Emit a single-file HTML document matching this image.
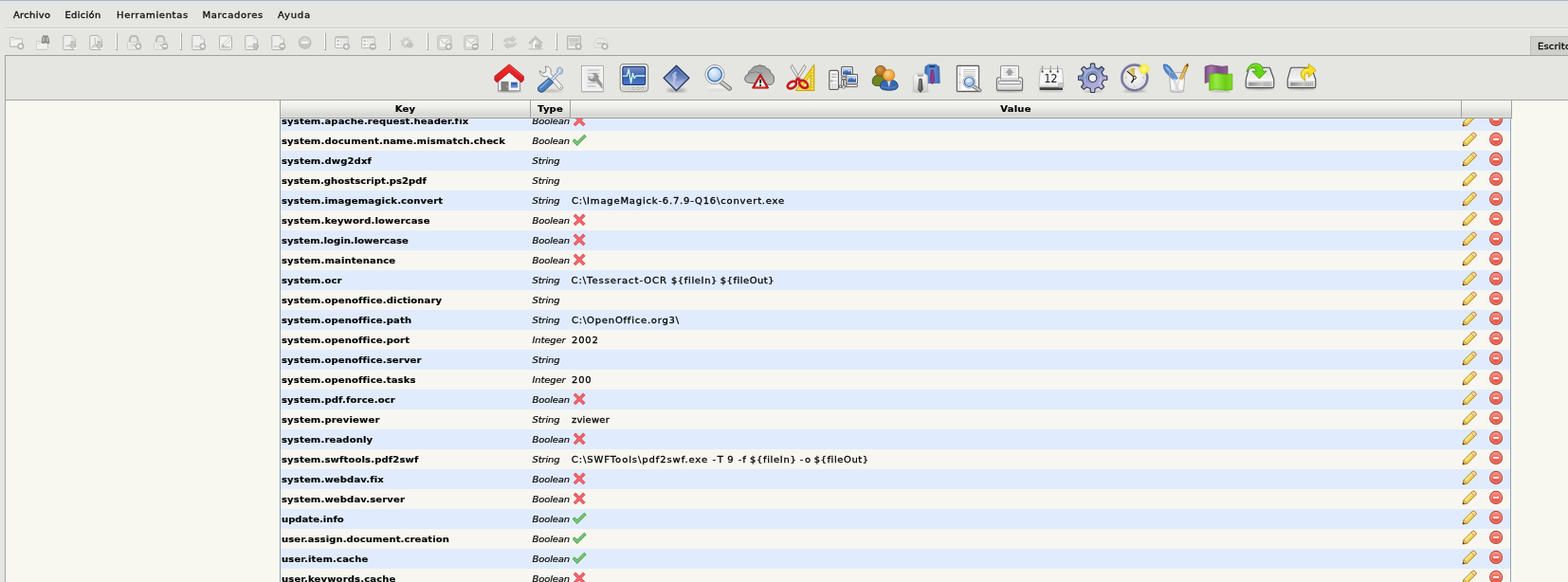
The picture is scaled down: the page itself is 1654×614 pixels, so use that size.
<!DOCTYPE html>
<html lang="es">
<head>
<meta charset="utf-8">
<title>Administration</title>
<style>
html,body{margin:0;padding:0}
body{width:1654px;height:614px;overflow:hidden;position:relative;background:#e5e6e1;font-family:"DejaVu Sans","Liberation Sans",sans-serif;font-size:10px;color:#000}
#topline{position:absolute;left:0;top:0;width:1654px;height:1px;background:#a9b5c6}
#menubar,#tab,#panel,#toolbar{will-change:transform}
#menubar{position:absolute;left:0;top:1px;width:1654px;height:28px}
.mi{position:absolute;top:0;height:28px;line-height:29px;font-size:10px;letter-spacing:.2px;white-space:nowrap;color:#111}
#menusep{position:absolute;left:5px;top:29px;width:1649px;height:1px;background:#cbcbc7;box-shadow:0 1px 0 #f7f7f3}
#toolbar{position:absolute;left:0;top:31px;width:1654px;height:27px}
#toolbar svg{position:absolute;top:6px}
#toolbar .sp{position:absolute;top:4px;width:1px;height:17px;background:#fafaf8;border-right:1px solid #a9a9a5;border-bottom:1px solid #a9a9a5}
#tab{position:absolute;left:1614px;top:38px;width:40px;height:20px;background:#cfcfcb;border-left:1px solid #bdbdb9;border-top:1px solid #bdbdb9;box-sizing:border-box;overflow:hidden}
#tab span{position:absolute;left:6.9px;top:0;line-height:19px;font-size:10px;letter-spacing:.2px;white-space:nowrap}
#panel{position:absolute;left:5px;top:58px;width:1649px;height:556px;border-left:1px solid #a2a29b;border-top:1px solid #a2a29b;box-sizing:border-box}
#bigbar{position:absolute;left:0;top:0;width:1648px;height:46px;background:#e5e6e1;border-bottom:1px solid #a2a29b}
#bigbar svg{position:absolute;top:7px}
#content{position:absolute;left:0;top:47px;width:1648px;height:509px;background:#f8f8f0}
#tbl{position:absolute;left:289px;top:0;width:1300px;height:509px;overflow:hidden}
#tbody{position:absolute;left:0;top:11px;width:1299px;box-sizing:border-box;border-left:1px solid #8b98ad;border-right:1px solid #8fa5c0}
.r{position:relative;height:21px;width:1297px}
.r.b{background:#e0ecfd}
.r.c{background:#f7f6f0}
.k{position:absolute;left:1px;top:0;line-height:21px;font-weight:bold;font-size:10px;letter-spacing:.17px;white-space:nowrap}
.t{position:absolute;left:265.5px;top:0;line-height:21px;font-style:italic;font-size:10px;letter-spacing:-.15px;white-space:nowrap}
.v{position:absolute;left:307px;top:0;line-height:21px;font-size:10px;letter-spacing:.78px;white-space:nowrap}
.bi{position:absolute;left:308px;top:2px}
.pe{position:absolute;left:1246px;top:1px}
.de{position:absolute;left:1274px;top:1px}
#thead{position:absolute;left:0;top:0;width:1300px;height:19px;box-sizing:border-box;border-bottom:1px solid #9c9c98;background:linear-gradient(#f6f6f4 0,#efefed 35%,#deded9 70%,#d6d6d2 88%,#e2e2de 100%)}
.h{position:absolute;top:0;height:18px;box-sizing:border-box;border-left:1px solid #a0a09c;text-align:center;font-weight:bold;font-size:10px;line-height:18px;letter-spacing:.2px}
.h.last{border-right:1px solid #a0a09c}
.k,.t,.v{transform:scaleY(.95);transform-origin:0 14px}
.mi{transform:scaleY(.95);transform-origin:0 18px}
.w{position:absolute;top:0;line-height:21px;white-space:nowrap}
.v,.mi,#tab span{-webkit-text-stroke:.3px #000}
.t{-webkit-text-stroke:.2px #000}
.h span{display:inline-block;transform:scaleY(.95);transform-origin:0 13px}
#tab span{transform:scaleY(.95);transform-origin:0 13px}
.k,.h span{-webkit-text-stroke:.18px #000}
</style>
</head>
<body>
<svg width="0" height="0" style="position:absolute">
<defs>
<linearGradient id="gDel" x1="0" y1="0" x2="0" y2="1"><stop offset="0" stop-color="#f6978a"/><stop offset=".5" stop-color="#ee6a5c"/><stop offset="1" stop-color="#e24a3c"/></linearGradient>
<symbol id="i-no" viewBox="0 0 16 16"><path d="M1.95 2.75 12.35 13.15M12.35 2.75 1.95 13.15" stroke="#dc4c58" stroke-width="3.4" fill="none"/><path d="M2.5 3.3 11.8 12.6M11.8 3.3 2.5 12.6" stroke="#f4686e" stroke-width="1.9" fill="none"/></symbol>
<symbol id="i-yes" viewBox="0 0 16 16"><path d="M.8 7.4 4.8 11.5 13.5 2.9" stroke="#4c9c4c" stroke-width="3.4" fill="none"/><path d="M1.3 7.9 4.8 11.4 13 3.4" stroke="#7cc978" stroke-width="1.9" fill="none"/></symbol>
<symbol id="i-pen" viewBox="0 0 16 16"><path d="M1.1 14.9 1.9 10.6 11.1 1.5Q12.6.5 14.3 2 15.8 3.7 14.8 5.1L5.6 14.2Z" fill="#f3d558" stroke="#ae822a" stroke-width="1" stroke-linejoin="round"/><path d="M3.4 11 11.8 2.7" stroke="#fbeea0" stroke-width="1.5" fill="none"/><path d="M6 13.2 14 5.2" stroke="#e2b93c" stroke-width="1" fill="none"/><path d="M11.1 1.6Q12.6.7 14.2 2.1 15.6 3.6 14.7 5L13.4 6.3 9.9 2.8Z" fill="#f9d6a8" stroke="#b88a3c" stroke-width=".8"/><path d="M1.1 14.9 1.9 10.6 5.6 14.2Z" fill="#f6cf98" stroke="#a8782c" stroke-width=".7" stroke-linejoin="round"/><path d="M1.1 14.9 1.6 12.8 3.3 14.5Z" fill="#2e1e08"/></symbol>
<symbol id="i-del" viewBox="0 0 16 16"><circle cx="8.1" cy="7.9" r="6.5" fill="url(#gDel)" stroke="#bc4238" stroke-width="1.1"/><circle cx="8.1" cy="7.9" r="5.5" fill="none" stroke="#fab4a8" stroke-width=".7" opacity=".8"/><rect x="5.1" y="7.1" width="6" height="1.7" fill="#fff"/></symbol>
<symbol id="bp" viewBox="0 0 16 16"><circle cx="11.8" cy="11.8" r="3.1" fill="#bcbcba" stroke="#a9a9a6" stroke-width=".9"/><path d="M9.8 11.8h4M11.8 9.8v4" stroke="#fff" stroke-width="1.2"/></symbol>
<symbol id="bm" viewBox="0 0 16 16"><circle cx="11.8" cy="11.8" r="3.1" fill="#bcbcba" stroke="#a9a9a6" stroke-width=".9"/><path d="M9.6 11.6h4.4" stroke="#fff" stroke-width="1.6"/></symbol>
<symbol id="doc" viewBox="0 0 16 16"><path d="M.8 1.2Q.8.5 1.5.5H9.6L13.4 4.2V14.8Q13.4 15.5 12.7 15.5H1.5Q.8 15.5.8 14.8Z" fill="#eeeeec" stroke="#b3b3af"/><path d="M9.6.8V4.2h3.6" fill="#e4e4e1" stroke="#d2d2ce" stroke-width=".8"/></symbol>
<symbol id="dn" viewBox="0 0 16 16"><path d="M9 6.5h3v4h2.2L10.5 14.6 6.8 10.5H9Z" fill="#c9c9c6" stroke="#b0b0ad" stroke-width=".8"/><circle cx="13.3" cy="14.2" r=".9" fill="#fff"/></symbol>
<symbol id="s1" viewBox="0 0 16 16"><path d="M.6 3.2Q.6 2.5 1.3 2.5H5l1 1.2h6.8q.7 0 .7.7V11.8q0 .7-.7.7H1.3q-.7 0-.7-.7Z" fill="#f1f1ef" stroke="#bdbdb9"/><path d="M2 5h3.2l.8-.8h5.5" stroke="#d4d4d1" fill="none" stroke-width=".9"/><path d="M1 11.6h9" stroke="#d8d8d5" stroke-width="1"/><use href="#bp"/></symbol>
<symbol id="s2" viewBox="0 0 16 16"><path d="M.2 7.4Q.2 6.7.9 6.7H4l.8 1h7q.7 0 .7.7V14.6q0 .7-.7.7H.9q-.7 0-.7-.7Z" fill="#f1f1ef" stroke="#c6c6c2"/><path d="M1.5 9h2.5" stroke="#d0d0cc" stroke-width=".9"/><path d="M6.6 3.2 7.6.8h1.6l.7 2 .6-2h1.6l1 2.4.8 5.1h-3.2l-.3-2.2h-.8l-.3 2.2H6.2Z" fill="#9a9a98" stroke="#777775" stroke-width=".8"/><path d="M7.8 2v5M12 2v5" stroke="#c8c8c6" stroke-width=".9"/></symbol>
<symbol id="s3" viewBox="0 0 16 16"><use href="#doc"/><path d="M3 11.5h4" stroke="#c4c4c0" stroke-width="1.3"/><use href="#dn"/></symbol>
<symbol id="s4" viewBox="0 0 16 16"><use href="#doc"/><path d="M6 2.5 6.4 9 2.2 14.4M6.4 9 11 14.4M3 12h6" stroke="#bcbcb8" fill="none" stroke-width="1"/><use href="#dn"/></symbol>
<symbol id="lk" viewBox="0 0 16 16"><path d="M3 7.5V5.2Q3 1 7.2 1 11.4 1 11.4 5.2V7.5" fill="none" stroke="#b9b9b5" stroke-width="2"/><path d="M4.6 7.5V5.4Q4.6 2.6 7.2 2.6 9.8 2.6 9.8 5.4V7.5" fill="none" stroke="#e6e6e3" stroke-width=".9"/><rect x=".6" y="7.3" width="13.2" height="7.9" rx=".8" fill="#f1f1ef" stroke="#cacac6"/><path d="M2.5 9.5h3.5M2.5 11.2h3.5M2.5 12.9h3.5" stroke="#d4d4d0" stroke-width=".9"/><path d="M7.2 9v3" stroke="#c2c2be" stroke-width="1.2"/></symbol>
<symbol id="s5" viewBox="0 0 16 16"><use href="#lk"/><use href="#bp"/></symbol>
<symbol id="s6" viewBox="0 0 16 16"><use href="#lk"/><use href="#bm"/></symbol>
<symbol id="s7" viewBox="0 0 16 16"><use href="#doc"/><path d="M3 12h5" stroke="#c4c4c0" stroke-width="1.3"/><use href="#bp"/></symbol>
<symbol id="s8" viewBox="0 0 16 16"><rect x="1.5" y=".8" width="13" height="14.5" rx=".8" fill="#f0f0ee" stroke="#b4b4b0"/><path d="M12.4 2.4 14.2 4.2 6.8 11.6 4 12.6 5 9.8Z" fill="#f7f7f5" stroke="#c0c0bc" stroke-width=".9"/><path d="M3.5 12.8h9" stroke="#bdbdb9" stroke-width="1.3"/><path d="M4 12.6 5 9.8 6.8 11.6Z" fill="#a8a8a5"/></symbol>
<symbol id="s9" viewBox="0 0 16 16"><use href="#doc"/><path d="M3 12h5" stroke="#c4c4c0" stroke-width="1.3"/><circle cx="11.6" cy="11.8" r="2.6" fill="#c4c4c1" stroke="#adadaa" stroke-width="1.6" stroke-dasharray="1.4 1"/></symbol>
<symbol id="s10" viewBox="0 0 16 16"><use href="#doc"/><path d="M3 12h5" stroke="#c4c4c0" stroke-width="1.3"/><use href="#bm"/></symbol>
<symbol id="s11" viewBox="0 0 16 16"><circle cx="7.7" cy="7.9" r="6.2" fill="#d6d6d3" stroke="#b4b4b1" stroke-width="1.1"/><path d="M1.9 8.6a5.8 5.8 0 0 0 11.6 0Z" fill="#c2c2bf" opacity=".8"/><path d="M4.3 7.9h6.8" stroke="#fff" stroke-width="2"/></symbol>
<symbol id="fm" viewBox="0 0 16 16"><rect x=".6" y="1.6" width="13.6" height="12" rx=".8" fill="#f3f3f1" stroke="#b9b9b5"/><path d="M1 2.8h12.8" stroke="#c3c3bf" stroke-width="1.6"/><path d="M2.4 6.2h2.6M2.4 10.2h2.6" stroke="#a9a9a6" stroke-width="1.3"/><path d="M6.5 5.2h6v2h-6zM6.5 9.2h6v2h-6z" fill="#fafaf9" stroke="#d2d2ce" stroke-width=".8"/></symbol>
<symbol id="s12" viewBox="0 0 16 16"><use href="#fm"/><use href="#bp" x=".6" y=".4"/></symbol>
<symbol id="s13" viewBox="0 0 16 16"><use href="#fm"/><use href="#bm" x=".6" y=".4"/></symbol>
<symbol id="s14" viewBox="0 0 16 16"><circle cx="7.6" cy="8" r="4.6" fill="none" stroke="#d2d2cf" stroke-width="3.4" stroke-dasharray="2.4 1.2"/><circle cx="7.6" cy="8" r="3.6" fill="#dededb" stroke="#c7c7c4" stroke-width="1.4"/><circle cx="7.6" cy="8" r="1.5" fill="#efefed"/><path d="M8.5 9.2h3.6V7.8l3 2.8-3 2.8V12H8.5Z" fill="#c6c6c3" stroke="#b2b2af" stroke-width=".8"/></symbol>
<symbol id="ml" viewBox="0 0 16 16"><rect x=".8" y=".8" width="14.2" height="14.4" rx="1.6" fill="#dcdcd9" stroke="#bcbcb8"/><rect x="2.6" y="3.4" width="10.6" height="9.4" fill="#f3f3f1" stroke="#d0d0cc" stroke-width=".8"/><path d="M3 4.2 7.9 9 12.8 4.2" fill="none" stroke="#cdcdc9" stroke-width="1.3"/></symbol>
<symbol id="s15" viewBox="0 0 16 16"><use href="#ml"/><use href="#bp" x=".4" y=".4"/></symbol>
<symbol id="s16" viewBox="0 0 16 16"><use href="#ml"/><use href="#bm" x=".4" y=".4"/></symbol>
<symbol id="s17" viewBox="0 0 16 16"><path d="M1.2 6.6Q3 3.2 6.6 3.2H10V1.2L14.2 4.4 10 7.6V5.8H6.6Q4.4 5.8 3.2 7.2Z" fill="#cdcdca" stroke="#bcbcb9" stroke-width=".7"/><path d="M14.8 8.8Q13 12.4 9.4 12.4H6V14.4L1.8 11.2 6 8V9.8H9.4Q11.6 9.8 12.8 8.4Z" fill="#cdcdca" stroke="#bcbcb9" stroke-width=".7"/></symbol>
<symbol id="s18" viewBox="0 0 16 16"><path d="M.8 8.2 8 1.2 15.2 8.2 13.6 9.6 8 4.2 2.4 9.6Z" fill="#c3c3c0" stroke="#b1b1ae" stroke-width=".7"/><path d="M3.2 8.8 8 4.2 12.8 8.8V14.8H3.2Z" fill="#d9d9d6"/><path d="M5.6 14.8V8.6Q5.6 6 8 5.4L8.8 7.2Q7.4 7.8 7.4 9.2V14.8Z" fill="#fff"/><path d="M7.6 10.4h4V9l3.2 2.6-3.2 2.6v-1.4h-4Z" fill="#c2c2bf" stroke="#adadaa" stroke-width=".7"/><path d="M.6 14.8h15" stroke="#bdbdba" stroke-width="1.1"/></symbol>
<symbol id="s19" viewBox="0 0 16 16"><rect x=".8" y="1.2" width="13.4" height="13.6" fill="#efefed" stroke="#adadaa" stroke-width="1.2"/><rect x="2.6" y="3" width="9.8" height="8.6" fill="#d3d3d0"/><path d="M2.6 3h9.8v3.6h-9.8z" fill="#c9c9c6"/><use href="#bp" x=".4" y=".2"/></symbol>
<symbol id="s20" viewBox="0 0 16 16"><path d="M.8 9 3 4.2Q3.4 3.4 4.2 3.4H11.6Q12.4 3.4 12.8 4.2L15 9V12.4Q15 13.2 14.2 13.2H1.6Q.8 13.2.8 12.4Z" fill="#f0f0ee" stroke="#cfcfcb"/><path d="M2.6 5.2h11" stroke="#d8d8d5" stroke-width="1"/><rect x="3" y="7.6" width="9.4" height="2" fill="#c7c7c4"/><path d="M1.2 11h13.4" stroke="#dcdcd9" stroke-width="1.2"/><use href="#bp" x=".2" y=".2"/></symbol>

<filter id="bl1" x="-30%" y="-30%" width="160%" height="160%"><feGaussianBlur stdDeviation="1"/></filter>
<filter id="bl2" x="-30%" y="-30%" width="160%" height="160%"><feGaussianBlur stdDeviation="1.6"/></filter>
<linearGradient id="gRoof" x1="0" y1="0" x2="0" y2="1"><stop offset="0" stop-color="#f0302c"/><stop offset="1" stop-color="#d8181c"/></linearGradient>
<linearGradient id="gScr" x1="0" y1="0" x2="0" y2="1"><stop offset="0" stop-color="#7a8ec6"/><stop offset=".42" stop-color="#4a6cb8"/><stop offset=".44" stop-color="#2f58a8"/><stop offset="1" stop-color="#4f7ad0"/></linearGradient>
<linearGradient id="gHandle" x1="0" y1="0" x2="1" y2="1"><stop offset="0" stop-color="#6fa0d8"/><stop offset="1" stop-color="#2f62a6"/></linearGradient>
<linearGradient id="gDia" x1=".62" y1=".05" x2=".38" y2=".95"><stop offset="0" stop-color="#38599a"/><stop offset=".45" stop-color="#6d86bd"/><stop offset=".75" stop-color="#aab6dc"/><stop offset="1" stop-color="#d6daf2"/></linearGradient>
<radialGradient id="gLens" cx=".4" cy=".35" r=".7"><stop offset="0" stop-color="#eef5fc"/><stop offset=".6" stop-color="#bcd6f0"/><stop offset="1" stop-color="#8fb6e4"/></radialGradient>
<linearGradient id="gCloud" x1="0" y1="0" x2="0" y2="1"><stop offset="0" stop-color="#9a9a9a"/><stop offset="1" stop-color="#bdbdbd"/></linearGradient>
<linearGradient id="gYel" x1="0" y1="0" x2="1" y2="0"><stop offset="0" stop-color="#f7e05a"/><stop offset="1" stop-color="#e8c818"/></linearGradient>
<radialGradient id="gHead1" cx=".4" cy=".35" r=".7"><stop offset="0" stop-color="#d8994a"/><stop offset="1" stop-color="#9c6418"/></radialGradient>
<radialGradient id="gHead2" cx=".4" cy=".35" r=".7"><stop offset="0" stop-color="#fbd08a"/><stop offset="1" stop-color="#e8901c"/></radialGradient>
<linearGradient id="gGrey" x1="0" y1="0" x2="0" y2="1"><stop offset="0" stop-color="#fafafa"/><stop offset="1" stop-color="#cfcfcf"/></linearGradient>
<linearGradient id="gGear" x1=".2" y1="0" x2=".8" y2="1"><stop offset="0" stop-color="#d6d8f0"/><stop offset=".35" stop-color="#7a90c0"/><stop offset=".7" stop-color="#b0acd8"/><stop offset="1" stop-color="#d4d4ee"/></linearGradient>
<radialGradient id="gFace" cx=".5" cy=".45" r=".6"><stop offset="0" stop-color="#ffffff"/><stop offset="1" stop-color="#d6d6d6"/></radialGradient>
<radialGradient id="gSun" cx=".5" cy=".5" r=".5"><stop offset="0" stop-color="#fffba8"/><stop offset=".55" stop-color="#f8f03c"/><stop offset="1" stop-color="#f4ea30" stop-opacity="0"/></radialGradient>
<linearGradient id="gPur" x1="0" y1="0" x2="1" y2="0"><stop offset="0" stop-color="#7a4c80"/><stop offset=".25" stop-color="#a878ae"/><stop offset=".6" stop-color="#7c4e84"/><stop offset="1" stop-color="#8e6094"/></linearGradient>
<linearGradient id="gGrn" x1="0" y1="0" x2="1" y2="0"><stop offset="0" stop-color="#74d018"/><stop offset=".3" stop-color="#9aec44"/><stop offset=".7" stop-color="#6ccc14"/><stop offset="1" stop-color="#84dc2c"/></linearGradient>
<linearGradient id="gDrv" x1="0" y1="0" x2="0" y2="1"><stop offset="0" stop-color="#dedede"/><stop offset=".6" stop-color="#f4f4f4"/><stop offset="1" stop-color="#e2e2e2"/></linearGradient>
<linearGradient id="gBar" x1="0" y1="0" x2="1" y2="0"><stop offset="0" stop-color="#8e8e8e"/><stop offset="1" stop-color="#c8c8c8"/></linearGradient>
<linearGradient id="gGlass" x1="0" y1="0" x2="0" y2="1"><stop offset="0" stop-color="#fff" stop-opacity=".08"/><stop offset=".3" stop-color="#fff" stop-opacity=".15"/><stop offset=".42" stop-color="#fff" stop-opacity=".8"/><stop offset="1" stop-color="#f4f4f4" stop-opacity=".85"/></linearGradient>
<linearGradient id="gShB" x1="0" y1="0" x2="1" y2="0"><stop offset="0" stop-color="#3e6cb4"/><stop offset=".5" stop-color="#6a98d8"/><stop offset="1" stop-color="#3e6cb4"/></linearGradient>

<symbol id="b1" viewBox="0 0 32 32">
<ellipse cx="16" cy="30.4" rx="13" ry="1.4" fill="#000" opacity=".25" filter="url(#bl1)"/>
<path d="M4.6 17 16.2 8 27.6 17V29.8H4.6Z" fill="#f5f5f5" stroke="#8a8a8a" stroke-width="1"/>
<rect x="7.9" y="20.2" width="7.2" height="9.6" fill="#7e7e7c" stroke="#6e6e6c" stroke-width=".6"/>
<circle cx="13.7" cy="25.4" r=".7" fill="#f0d860"/>
<rect x="17.4" y="20.2" width="7.8" height="6.6" fill="#3a62ac" stroke="#fdfdfd" stroke-width=".8"/>
<path d="M17.9 23.4h6.8v2.9h-6.8z" fill="#6288cc"/>
<path d="M16.2 1.9 31.3 14.4V18.4L29 20.9 16.2 10 3.2 20.9 .9 18.4V14.4Z" fill="url(#gRoof)" stroke="#b81418" stroke-width=".9" stroke-linejoin="round"/>
<path d="M16.2 3.2 30.2 14.9" stroke="#f8706c" stroke-width=".8" fill="none" opacity=".7"/>
</symbol>

<symbol id="b2" viewBox="0 0 32 32">
<ellipse cx="16" cy="30" rx="12" ry="1.5" fill="#000" opacity=".18" filter="url(#bl1)"/>
<path d="M10 4.2Q13.8 3.4 15.6 6.4 16.8 9 15.8 11.4L28 24.6Q29.4 26.6 27.8 28 26.2 29.2 24.6 27.6L12.6 14.4Q9.6 15.6 7 14 4 12 4.4 8.6L8 11.4 11 9.8 10.8 6.4Z" fill="#f2f2f2" stroke="#8e8e8e" stroke-width="1" stroke-linejoin="round"/>
<circle cx="26.4" cy="26.2" r=".8" fill="#9a9a9a"/>
<path d="M25.9 4.8 28.9 7.8 27.6 11.6 24.6 12.4 17.6 19.6 15.6 17.6 22.6 10.2 23 6.4Z" fill="#b9c9e2" stroke="#7e92b4" stroke-width=".9" stroke-linejoin="round"/>
<path d="M26 6.4 24.2 11 17 18.2" stroke="#eef2fa" stroke-width=".9" fill="none"/>
<path d="M14 16.4 18.6 21 8.6 30.4Q5.6 32.4 3.2 30.2 1.4 27.8 3.4 25.2Z" fill="url(#gHandle)" stroke="#24508e" stroke-width="1" stroke-linejoin="round"/>
<path d="M5 27 13.6 18.6" stroke="#9cc0ea" stroke-width="1.2" fill="none" opacity=".8"/>
</symbol>

<symbol id="b3" viewBox="0 0 32 32">
<rect x="4.2" y="29.6" width="23.6" height="1.6" fill="#000" opacity=".25" filter="url(#bl1)"/>
<rect x="4.4" y="3.4" width="23" height="27" fill="#efefef" stroke="#adadad" stroke-width="1"/>
<rect x="5.6" y="4.6" width="20.6" height="24.6" fill="none" stroke="#fafafa" stroke-width="1"/>
<path d="M10.5 8h13M10.5 11.4h13M10.5 14.8h13M10.5 18.2h13M10.5 21.6h13M10.5 25h9" stroke="#c9c9c9" stroke-width="1.5"/>
<path d="M16.2 11.6Q19.6 10.6 21.4 13 22.6 15 21.8 17.2L26 22.6 26.2 27.2 20 19.6Q16.6 21 13.8 19.2 11.8 17.6 11.6 15.6L14.8 17.4 18 15.8 18.2 13.2Z" fill="#8f8f8f" stroke="#858585" stroke-width=".6" stroke-linejoin="round" opacity=".92"/>
</symbol>

<symbol id="b4" viewBox="0 0 32 32">
<ellipse cx="16" cy="30.6" rx="14" ry="1.2" fill="#000" opacity=".22" filter="url(#bl1)"/>
<rect x="1.2" y="1.6" width="29.4" height="28.6" rx="3.4" fill="#fbfbf9" stroke="#8e8e8a" stroke-width="1.1"/>
<rect x="2.4" y="24.6" width="27" height="4.6" rx="1.6" fill="#d6d6d0"/>
<rect x="3.9" y="4.4" width="23.8" height="19" rx="1.6" fill="url(#gScr)" stroke="#1d3c7c" stroke-width="1.2"/>
<path d="M4 14.2H8.4L10.2 7.2 12.6 21.6 14.4 11.4 16.2 16.6 17.8 14H27.4" fill="none" stroke="#d6ffe2" stroke-width="1.3" stroke-linejoin="round"/>
<circle cx="15.2" cy="27.4" r="1.2" fill="#f6f6f4" stroke="#9a9a94" stroke-width=".7"/><circle cx="19.9" cy="27.4" r="1.2" fill="#f6f6f4" stroke="#9a9a94" stroke-width=".7"/><circle cx="24.5" cy="27.4" r="1.2" fill="#f6f6f4" stroke="#9a9a94" stroke-width=".7"/>
</symbol>

<symbol id="b5" viewBox="0 0 32 32">
<ellipse cx="16.5" cy="29.4" rx="10.5" ry="2" fill="#000" opacity=".3" filter="url(#bl2)"/>
<path d="M16.5 3.2 29.9 16.3 16.5 29.5 3.1 16.3Z" fill="url(#gDia)" stroke="#2b3a66" stroke-width="1.4" stroke-linejoin="round"/>
<path d="M16.5 5 28 16.3 16.5 27.6 5 16.3Z" fill="none" stroke="#a8b8e0" stroke-width=".7" opacity=".7"/>
<path d="M15.2 9.4 16.8 10.2 15.6 13.4 17 15.4 15.8 17 15 20.8 13.6 24 11.6 23.8 12.8 20 13 16.4 12 13Z" fill="#b4c2e6" opacity=".9"/>
<path d="M16 21.6 18 19.8 19.4 20.6 20.6 18.6 22.2 19.2 23 17.2 24.6 17.6 22 21.8 18.6 25.2 15.4 24.8Z" fill="#9fb0dc" opacity=".8"/>
</symbol>

<symbol id="b6" viewBox="0 0 32 32">
<ellipse cx="14.8" cy="27.2" rx="9" ry="2.4" fill="#fff" opacity=".75" filter="url(#bl1)"/>
<ellipse cx="14.8" cy="28.6" rx="9" ry="1.4" fill="#000" opacity=".12" filter="url(#bl1)"/>
<path d="M19.6 20.6 28.6 27.4" stroke="#6a6a6a" stroke-width="4.6" stroke-linecap="round"/>
<path d="M19.6 20.6 28.6 27.4" stroke="#c2c2c2" stroke-width="2.8" stroke-linecap="round"/>
<path d="M21.4 21 28 26" stroke="#e6e6e6" stroke-width=".9" stroke-linecap="round"/>
<circle cx="13" cy="12.6" r="10.1" fill="#f6f8fa" stroke="#9a9a9a" stroke-width="1"/>
<circle cx="13" cy="12.6" r="7.4" fill="url(#gLens)" stroke="#3f6eb4" stroke-width="1.3"/>
<path d="M8 11Q9 6.8 13.6 6.6 11 8.4 8 11Z" fill="#fff" opacity=".8"/>
</symbol>

<symbol id="b7" viewBox="0 0 32 32">
<path d="M6 21.4Q.6 21.2.6 16.8.8 13 4.2 12.6 4 8.6 7.8 7.6 9.2 3.6 13.4 3.8 16 2 19 3.4 22.2 3.2 23.8 6.2 27.6 6.8 28 11 31.6 12.4 31.6 17 31.8 23.2 26.6 23.4Z" fill="url(#gCloud)" stroke="#6e6e6e" stroke-width="1" stroke-linejoin="round"/>
<path d="M3.6 13.4Q5.6 9.4 9.4 10.6 12.4 8.6 15.2 10.8 17.6 10.2 19.4 12" fill="none" stroke="#777" stroke-width=".9"/>
<path d="M17.1 13.2 24.8 26.5H9.4Z" fill="#fff" stroke="#a40000" stroke-width="2.2" stroke-linejoin="round"/>
<path d="M17.1 13.2 24.8 26.5H9.4Z" fill="none" stroke="#d42828" stroke-width=".9" stroke-linejoin="round"/>
<rect x="16.2" y="17.6" width="1.9" height="4.2" fill="#000"/><rect x="16.2" y="22.9" width="1.9" height="1.9" fill="#000"/>
</symbol>

<symbol id="b8" viewBox="0 0 32 32">
<path d="M29.8 2V29.5H10.4Z" fill="url(#gYel)" stroke="#c4a400" stroke-width="1" stroke-linejoin="round"/>
<path d="M26 13.4V25.6H17.2Z" fill="#f4ecb0" stroke="#c4a400" stroke-width=".8" stroke-linejoin="round"/>
<path d="M28 6v1M28 9v1M28 12v1M28 15v1M28 18v1M28 21v1M28 24v1M28 27v1" stroke="#fff7b0" stroke-width="1.6"/>
<path d="M6.6 2.4 5 5.2 13.4 18.4 15.4 17.2Z" fill="#ebebe8" stroke="#8a8a8a" stroke-width=".9" stroke-linejoin="round"/>
<path d="M19.4 2.4 21 5.2 12.4 18.4 10.4 17.2Z" fill="#ebebe8" stroke="#8a8a8a" stroke-width=".9" stroke-linejoin="round"/>
<ellipse cx="6.4" cy="23.6" rx="5" ry="3.2" transform="rotate(-32 6.4 23.6)" fill="none" stroke="#c41818" stroke-width="2.6"/>
<ellipse cx="18.6" cy="22.8" rx="5" ry="3.3" transform="rotate(38 18.6 22.8)" fill="none" stroke="#c41818" stroke-width="2.6"/>
<path d="M10 20.6 12.8 16.6 15.6 20.4" fill="none" stroke="#cc1c1c" stroke-width="2.6" stroke-linejoin="round"/>
</symbol>

<symbol id="mon" viewBox="0 0 13 11"><rect x=".6" y=".6" width="11.8" height="9.8" rx="1.4" fill="#f4f4f4" stroke="#5e5e5e" stroke-width="1.1"/><rect x="2.2" y="2.2" width="8.6" height="6.4" fill="#4a78bc"/><path d="M2.2 2.2h8.6v2.6L8.6 6 6.4 4.2 2.2 5.4Z" fill="#b8cdea"/><path d="M2.2 6.8h8.6v1.8h-8.6z" fill="#2f5ea6"/></symbol>
<symbol id="b9" viewBox="0 0 32 32">
<path d="M10 25.6h12M16.6 14v11" stroke="#666" stroke-width="1" fill="none"/>
<rect x="14.8" y="15.2" width="4.4" height="2.2" fill="#f4f4f4" stroke="#5e5e5e" stroke-width=".9"/>
<rect x="14.6" y="18.6" width="2" height="6" fill="#f0f0f0" stroke="#6a6a6a" stroke-width=".8"/><rect x="17.6" y="18.6" width="2" height="6" fill="#f0f0f0" stroke="#6a6a6a" stroke-width=".8"/>
<rect x="12.6" y="24" width="2" height="2.4" fill="#e8e8e8" stroke="#666" stroke-width=".8"/><rect x="15.4" y="24.2" width="3" height="3" rx="1" fill="#d8d8d8" stroke="#777" stroke-width=".8"/>
<use href="#mon" x="14" y="3.8" width="13" height="11"/>
<use href="#mon" x="19.2" y="11.8" width="13" height="11"/>
<rect x="19.8" y="23" width="11.6" height="2.6" rx=".6" fill="#f6f6f6" stroke="#5e5e5e" stroke-width="1"/>
<path d="M1.8 10Q1.8 8.4 3.4 8.4H9.8Q11.4 8.4 11.4 10V27.2Q11.4 28.4 10.2 28.4H3Q1.8 28.4 1.8 27.2Z" fill="#fbfbfb" stroke="#5e5e5e" stroke-width="1.2"/>
<path d="M3.8 12.4h5.6M3.8 15.4h5.6" stroke="#bdbdbd" stroke-width="1.7"/>
<circle cx="4.4" cy="19.4" r="1" fill="#e0e0e0" stroke="#777" stroke-width=".7"/><path d="M6.4 19.4h3" stroke="#c4c4c4" stroke-width="1.4"/>
<path d="M4 22v5M5.6 22v5M7.2 22v5M8.8 22v5" stroke="#c8c8c8" stroke-width=".8"/>
</symbol>

<symbol id="b10" viewBox="0 0 32 32">
<path d="M3.2 20.4Q3.2 13.4 9.6 13.4 16.2 13.4 16.2 20.4 16.2 24.6 9.6 24.6 3.2 24.6 3.2 20.4Z" fill="#6f8420" stroke="#4a5a10" stroke-width="1"/>
<circle cx="11.9" cy="8.8" r="5.5" fill="url(#gHead1)" stroke="#85541a" stroke-width=".9"/>
<path d="M11.4 25Q11.4 18.2 20.8 18.2 30.2 18.2 30.2 25 30.2 29.2 20.8 29.2 11.4 29.2 11.4 25Z" fill="#3868ac" stroke="#204a87" stroke-width="1"/>
<path d="M13 25.2Q20.8 28.6 28.6 25.2" fill="none" stroke="#6f9ad8" stroke-width=".8" opacity=".8"/>
<path d="M19.2 18.8 20.8 25.4 22.4 18.8Z" fill="#e8f0fa" stroke="#c6d6ee" stroke-width=".5"/>
<circle cx="20.7" cy="13.3" r="6" fill="url(#gHead2)" stroke="#d08618" stroke-width=".9"/>
</symbol>

<symbol id="b11" viewBox="0 0 32 32">
<ellipse cx="10" cy="30.4" rx="9" ry="1.2" fill="#000" opacity=".25" filter="url(#bl1)"/>
<path d="M15 4.4 18.6 2.2H26L29.6 4.4 30.2 21.6H14.4Z" fill="url(#gShB)" stroke="#3465a4" stroke-width=".9" stroke-linejoin="round"/>
<path d="M18.8 3h7L25 5.6H19.6Z" fill="#1f4690"/>
<path d="M21.2 7.8h2.4L24.8 19.6 22.4 22.8 20 19.6Z" fill="#8c3c8e" stroke="#6e2a72" stroke-width=".7" stroke-linejoin="round"/>
<path d="M2.6 13.6 6.2 11.4H13.6L17.2 13.6 17.6 30H2.2Z" fill="url(#gGrey)" stroke="#c8c8c8" stroke-width=".9" stroke-linejoin="round"/>
<path d="M6.4 12.4h7L12.6 14.8H7.2Z" fill="#a6a6a2"/>
<path d="M8.8 17.2h2.4L12.4 28.4 10 31.4 7.6 28.4Z" fill="#5a5a58" stroke="#444" stroke-width=".7" stroke-linejoin="round"/>
<path d="M9.6 18.4 9 28" stroke="#8e8e8c" stroke-width=".9"/>
</symbol>

<symbol id="b12" viewBox="0 0 32 32">
<rect x="4.2" y="29.6" width="23.6" height="1.6" fill="#000" opacity=".3" filter="url(#bl1)"/>
<rect x="4.4" y="3.4" width="23.2" height="27" rx=".8" fill="#fcfcfc" stroke="#5a5a5a" stroke-width="1.1"/>
<path d="M7.6 4v26" stroke="#e0e0e0" stroke-width="1.6"/>
<path d="M11 7.6h13M11 9.8h13M11 12h13M11 14.2h13" stroke="#b9b9b9" stroke-width=".9"/>
<circle cx="7.6" cy="12.4" r=".6" fill="#c07070"/><circle cx="7.6" cy="21.2" r=".6" fill="#c07070"/>
<path d="M21.6 24.8 28.6 29.4" stroke="#6e6e6e" stroke-width="3.8" stroke-linecap="round"/>
<path d="M21.6 24.8 28.6 29.4" stroke="#c6c6c6" stroke-width="2.2" stroke-linecap="round"/>
<circle cx="17.4" cy="20.4" r="6.6" fill="#f4f6fa" stroke="#a2a2a2" stroke-width=".9"/>
<circle cx="17.4" cy="20.4" r="4.9" fill="url(#gLens)" stroke="#3f6eb4" stroke-width="1.2"/>
<path d="M14 21.4h6.8M14.6 23h5.6" stroke="#8eaede" stroke-width=".8" opacity=".8"/>
</symbol>

<symbol id="b13" viewBox="0 0 32 32">
<ellipse cx="16" cy="30.2" rx="14" ry="1.3" fill="#000" opacity=".28" filter="url(#bl1)"/>
<path d="M2.4 18.4Q2.4 15.8 5 15.8H27Q29.6 15.8 29.6 18.4V27.4Q29.6 29.4 27.6 29.4H4.4Q2.4 29.4 2.4 27.4Z" fill="url(#gGrey)" stroke="#6c6c6c" stroke-width="1.1"/>
<rect x="6.6" y="3.4" width="18.8" height="15" rx=".6" fill="#fbfbfb" stroke="#8a8a8a" stroke-width="1"/>
<path d="M9 6.6h14M9 8.8h14M9 11h14M9 13.2h14" stroke="#d0d0d0" stroke-width=".9"/>
<path d="M16 5.8 20.6 11H18.2V13.8H13.8V11H11.4Z" fill="#a2a2a2"/>
<path d="M6.8 15.6h18.4v3.2H6.8z" fill="#d9d9d9" opacity=".9"/>
<path d="M4.4 19.6h23.2v2.2Q27.6 22.8 26.6 22.8H5.4Q4.4 22.8 4.4 21.8Z" fill="#fdfdfd" stroke="#7a7a7a" stroke-width=".9"/>
<path d="M3.6 24.4h24.8" stroke="#fff" stroke-width="1" opacity=".7"/>
</symbol>

<symbol id="b14" viewBox="0 0 32 32">
<ellipse cx="16" cy="29.4" rx="13" ry="1.2" fill="#000" opacity=".22" filter="url(#bl1)"/>
<rect x="3.6" y="25.8" width="24.4" height="3.1" rx=".6" fill="#404040"/>
<path d="M4.4 6.6H27.6L28.8 24.8Q28.8 25.8 27.8 25.8H3.8Q2.8 25.8 2.8 24.8Z" fill="#f6f6f6" stroke="#b6b6b6" stroke-width=".9"/>
<path d="M3 24.2h25.6" stroke="#dadada" stroke-width="1"/>
<path d="M28.6 21.2 23.4 21.8 24 26.2H27.8Q28.8 26.2 28.8 25.2Z" fill="#c9c9c9" stroke="#a8a8a8" stroke-width=".6"/>
<path d="M6.4 3.8V9M15.2 3.2V9M22.6 3.2V9" stroke="#9a9a9a" stroke-width="1.1"/>
<circle cx="6.6" cy="9.6" r="1.1" fill="#444"/><circle cx="15.2" cy="9.6" r="1.1" fill="#444"/><circle cx="22.8" cy="9.6" r="1.1" fill="#444"/>
<circle cx="6.6" cy="4.6" r="1.3" fill="none" stroke="#c0c0c0" stroke-width=".8"/>
<text x="15.2" y="20.5" font-family="'DejaVu Sans','Liberation Sans',sans-serif" font-size="11.5" text-anchor="middle" fill="#1a1a1a" letter-spacing="-.4">12</text>
</symbol>

<symbol id="b15" viewBox="0 0 32 32">
<ellipse cx="16" cy="30.6" rx="10" ry="1.3" fill="#000" opacity=".2" filter="url(#bl1)"/>
<path d="M13.1 5.2 L13.6 1.1 L17.6 1.1 L18.1 5.2 L21.7 6.7 L24.9 4.2 L27.7 7.0 L25.2 10.2 L26.7 13.8 L30.8 14.3 L30.8 18.3 L26.7 18.8 L25.2 22.4 L27.7 25.6 L24.9 28.4 L21.7 25.9 L18.1 27.4 L17.6 31.5 L13.6 31.5 L13.1 27.4 L9.5 25.9 L6.3 28.4 L3.5 25.6 L6.0 22.4 L4.5 18.8 L0.4 18.3 L0.4 14.3 L4.5 13.8 L6.0 10.2 L3.5 7.0 L6.3 4.2 L9.5 6.7Z" fill="url(#gGear)" stroke="#2e3650" stroke-width="1.1" stroke-linejoin="round"/>
<circle cx="15.6" cy="16.3" r="8.6" fill="none" stroke="#e4e4f6" stroke-width=".8" opacity=".6"/>
<path d="M7.4 19.6A8.8 8.8 0 0 0 21.6 23" fill="none" stroke="#a59ed0" stroke-width="3.4" opacity=".55"/>
<circle cx="15.6" cy="16.3" r="4.2" fill="#f0f0ee" stroke="#2e3650" stroke-width="1.1"/>
</symbol>

<symbol id="b16" viewBox="0 0 32 32">
<ellipse cx="16" cy="30.2" rx="12" ry="1.6" fill="#000" opacity=".22" filter="url(#bl1)"/>
<circle cx="15.8" cy="15.9" r="13.5" fill="url(#gFace)" stroke="#73739a" stroke-width="2.5"/>
<circle cx="15.8" cy="15.9" r="14.8" fill="none" stroke="#a6a6c0" stroke-width=".6"/>
<path d="M15.8 15.9 8.4 9.2A10 10 0 0 1 15.8 5.6Z" fill="#e4c860" opacity=".85"/>
<path d="M15.8 15.9 15.8 5.6A10 10 0 0 0 11.4 6.8Z" fill="#cfae48" opacity=".7"/>
<circle cx="15.8" cy="6.6" r=".8" fill="#b8b8b8"/><circle cx="25" cy="15.9" r=".8" fill="#b8b8b8"/><circle cx="15.8" cy="25.2" r=".8" fill="#b8b8b8"/><circle cx="6.6" cy="15.9" r=".8" fill="#b8b8b8"/>
<path d="M15.8 15.9 8.2 9.4" stroke="#111" stroke-width="1.1" stroke-linecap="round"/>
<path d="M15.8 15.9 12.8 20.8" stroke="#111" stroke-width="1.5" stroke-linecap="round"/>
<circle cx="15.8" cy="15.9" r="1.6" fill="#fff" stroke="#111" stroke-width=".9"/>
<circle cx="25.8" cy="6.8" r="6.7" fill="url(#gSun)"/>
</symbol>

<symbol id="b17" viewBox="0 0 32 32">
<ellipse cx="16.6" cy="30.8" rx="8" ry="1" fill="#000" opacity=".15" filter="url(#bl1)"/>
<path d="M27.8 1 28.4 3.4 21.8 18.6 19 17.4 25.4 3.2Z" fill="#e0a434" stroke="#a87414" stroke-width=".8" stroke-linejoin="round"/>
<path d="M27.8 1 28.4 3.4 27 4.6 26 3.4Z" fill="#5a3c10"/>
<path d="M26.4 4.4 20.4 17.6" stroke="#f4cc70" stroke-width=".9"/>
<path d="M2.4 2Q6.4 1 10 5.6L17.4 16.8 13.6 19.4 4.6 10Q1.8 6 2.4 2Z" fill="#4e84cc" stroke="#3a6cb4" stroke-width=".8" stroke-linejoin="round"/>
<path d="M4.4 4.4 8 9.4M6 4.6 10.4 10.6" stroke="#b8d4f4" stroke-width="1" opacity=".9"/>
<path d="M8.4 10.4H25L23.6 29Q23.4 31 21.4 31H12Q10 31 9.8 29Z" fill="url(#gGlass)" stroke="#a6a6a6" stroke-width=".9" stroke-linejoin="round"/>
<path d="M13.4 18 17.8 29.8" stroke="#c8d4ec" stroke-width="3" opacity=".75"/>
<path d="M19 18.4 15 29" stroke="#f0c8b8" stroke-width="2.2" opacity=".6"/>
<path d="M10.4 29.2Q16.6 32 23 29.2" fill="none" stroke="#c2c2c2" stroke-width=".9"/>
</symbol>

<symbol id="b18" viewBox="0 0 32 32">
<ellipse cx="18.6" cy="30" rx="11" ry="1.2" fill="#000" opacity=".22" filter="url(#bl1)"/>
<path d="M2.2 4.4Q7.6 1.8 13.6 3.4 19.6 5.2 25.8 3.8V20Q19.6 21.2 13.6 19.6 7.6 18.2 2.2 21.6Z" fill="url(#gPur)" stroke="#6a3e70" stroke-width=".9" stroke-linejoin="round"/>
<path d="M6.8 13Q12.6 10.4 18.6 12 24.8 13.4 30.8 12V28.4Q24.8 30 18.6 28.4 12.6 27 6.8 29.4Z" fill="url(#gGrn)" stroke="#5cb80c" stroke-width=".9" stroke-linejoin="round"/>
</symbol>

<symbol id="drv" viewBox="0 0 32 32">
<ellipse cx="16" cy="27.2" rx="14.4" ry="1.3" fill="#000" opacity=".3" filter="url(#bl1)"/>
<path d="M5.8 5.2H25.4Q26.4 5.2 26.8 6.2L30.6 17.2Q30.8 17.8 30.8 18.4V25Q30.8 26.6 29.2 26.6H2.8Q1.2 26.6 1.2 25V18.4Q1.2 17.8 1.4 17.2L4.4 6.2Q4.8 5.2 5.8 5.2Z" fill="url(#gDrv)" stroke="#4c4c4c" stroke-width="1.1" stroke-linejoin="round"/>
<path d="M2.4 18.4H29.6" stroke="#fff" stroke-width="1.2" opacity=".9"/>
<rect x="2.6" y="19.2" width="26.8" height="6.2" rx=".8" fill="#dadada"/>
<rect x="4.4" y="21" width="14.4" height="3.6" fill="url(#gBar)"/>
<path d="M20 20.6v4.4M21.8 20.6v4.4M23.6 20.6v4.4M25.4 20.6v4.4M27.2 20.6v4.4" stroke="#9a9a9a" stroke-width=".9"/>
</symbol>
<symbol id="b19" viewBox="0 0 32 32">
<use href="#drv"/>
<path d="M2 9.6Q4.2 1 11.6 1 18.8 1 19.2 9.2H23L15.5 17 8 9.2H12.2Q11.8 5.6 8.6 5.4 5 5.2 2 9.6Z" fill="#66d414" stroke="#3e9c04" stroke-width=".9" stroke-linejoin="round"/>
<path d="M3.6 7.2Q6.6 2.6 11.6 2.2 16.6 2.2 17.8 7.6" fill="none" stroke="#a4f060" stroke-width=".9" opacity=".8"/>
</symbol>
<symbol id="b20" viewBox="0 0 32 32">
<use href="#drv"/>
<path d="M19.8 19.2Q14.6 15.6 15.4 11 16.4 5.8 23.4 5.8V1.2L31.2 8.2 23.4 15.4V11Q20.6 10.8 19.6 12.8 18.4 15.2 19.8 19.2Z" fill="#f4de28" stroke="#c8a800" stroke-width=".9" stroke-linejoin="round"/>
<path d="M17 13.2Q17 7.8 24 7.2" fill="none" stroke="#fff6a0" stroke-width=".9" opacity=".8"/>
</symbol>

</defs>
</svg>
<div id="topline"></div>
<div id="menubar"><span class="mi" style="left:14px;letter-spacing:.28px">Archivo</span><span class="mi" style="left:68.5px;letter-spacing:.28px">Edición</span><span class="mi" style="left:123px;letter-spacing:.64px">Herramientas</span><span class="mi" style="left:213.5px;letter-spacing:.64px">Marcadores</span><span class="mi" style="left:293px;letter-spacing:.78px">Ayuda</span></div>
<div id="menusep"></div>
<div id="toolbar">
<svg width="16" height="16" viewBox="0 0 16 16" style="left:10px"><use href="#s1"/></svg>
<svg width="16" height="16" viewBox="0 0 16 16" style="left:38px"><use href="#s2"/></svg>
<svg width="16" height="16" viewBox="0 0 16 16" style="left:66px"><use href="#s3"/></svg>
<svg width="16" height="16" viewBox="0 0 16 16" style="left:94px"><use href="#s4"/></svg>
<svg width="16" height="16" viewBox="0 0 16 16" style="left:134px"><use href="#s5"/></svg>
<svg width="16" height="16" viewBox="0 0 16 16" style="left:162px"><use href="#s6"/></svg>
<svg width="16" height="16" viewBox="0 0 16 16" style="left:202px"><use href="#s7"/></svg>
<svg width="16" height="16" viewBox="0 0 16 16" style="left:230px"><use href="#s8"/></svg>
<svg width="16" height="16" viewBox="0 0 16 16" style="left:258px"><use href="#s9"/></svg>
<svg width="16" height="16" viewBox="0 0 16 16" style="left:286px"><use href="#s10"/></svg>
<svg width="16" height="16" viewBox="0 0 16 16" style="left:314px"><use href="#s11"/></svg>
<svg width="16" height="16" viewBox="0 0 16 16" style="left:353px"><use href="#s12"/></svg>
<svg width="16" height="16" viewBox="0 0 16 16" style="left:381px"><use href="#s13"/></svg>
<svg width="16" height="16" viewBox="0 0 16 16" style="left:421px"><use href="#s14"/></svg>
<svg width="16" height="16" viewBox="0 0 16 16" style="left:461px"><use href="#s15"/></svg>
<svg width="16" height="16" viewBox="0 0 16 16" style="left:489px"><use href="#s16"/></svg>
<svg width="16" height="16" viewBox="0 0 16 16" style="left:530px"><use href="#s17"/></svg>
<svg width="16" height="16" viewBox="0 0 16 16" style="left:557px"><use href="#s18"/></svg>
<svg width="16" height="16" viewBox="0 0 16 16" style="left:597.5px"><use href="#s19"/></svg>
<svg width="16" height="16" viewBox="0 0 16 16" style="left:626px"><use href="#s20"/></svg>
<i class="sp" style="left:122px"></i>
<i class="sp" style="left:190px"></i>
<i class="sp" style="left:342px"></i>
<i class="sp" style="left:410px"></i>
<i class="sp" style="left:450px"></i>
<i class="sp" style="left:518px"></i>
<i class="sp" style="left:586px"></i>
</div>
<div id="tab"><span>Escritorio</span></div>
<div id="panel">
<div id="bigbar">
<svg width="32" height="32" viewBox="0 0 32 32" style="left:515px"><use href="#b1"/></svg>
<svg width="32" height="32" viewBox="0 0 32 32" style="left:559px"><use href="#b2"/></svg>
<svg width="32" height="32" viewBox="0 0 32 32" style="left:603px"><use href="#b3"/></svg>
<svg width="32" height="32" viewBox="0 0 32 32" style="left:647px"><use href="#b4"/></svg>
<svg width="32" height="32" viewBox="0 0 32 32" style="left:691px"><use href="#b5"/></svg>
<svg width="32" height="32" viewBox="0 0 32 32" style="left:735px"><use href="#b6"/></svg>
<svg width="32" height="32" viewBox="0 0 32 32" style="left:779px"><use href="#b7"/></svg>
<svg width="32" height="32" viewBox="0 0 32 32" style="left:823px"><use href="#b8"/></svg>
<svg width="32" height="32" viewBox="0 0 32 32" style="left:867px"><use href="#b9"/></svg>
<svg width="32" height="32" viewBox="0 0 32 32" style="left:911px"><use href="#b10"/></svg>
<svg width="32" height="32" viewBox="0 0 32 32" style="left:955px"><use href="#b11"/></svg>
<svg width="32" height="32" viewBox="0 0 32 32" style="left:999px"><use href="#b12"/></svg>
<svg width="32" height="32" viewBox="0 0 32 32" style="left:1043px"><use href="#b13"/></svg>
<svg width="32" height="32" viewBox="0 0 32 32" style="left:1087px"><use href="#b14"/></svg>
<svg width="32" height="32" viewBox="0 0 32 32" style="left:1131px"><use href="#b15"/></svg>
<svg width="32" height="32" viewBox="0 0 32 32" style="left:1175px"><use href="#b16"/></svg>
<svg width="32" height="32" viewBox="0 0 32 32" style="left:1219px"><use href="#b17"/></svg>
<svg width="32" height="32" viewBox="0 0 32 32" style="left:1263px"><use href="#b18"/></svg>
<svg width="32" height="32" viewBox="0 0 32 32" style="left:1307px"><use href="#b19"/></svg>
<svg width="32" height="32" viewBox="0 0 32 32" style="left:1351px"><use href="#b20"/></svg>
</div>
<div id="content">
<div id="tbl">
<div id="tbody">
<div class="r b"><b class="k">system.apache.request.header.fix</b><i class="t">Boolean</i><svg class="bi" width="16" height="16" viewBox="0 0 16 16"><use href="#i-no"/></svg><svg class="pe" width="16" height="16" viewBox="0 0 16 16"><use href="#i-pen"/></svg><svg class="de" width="16" height="16" viewBox="0 0 16 16"><use href="#i-del"/></svg></div>
<div class="r c"><b class="k">system.document.name.mismatch.check</b><i class="t">Boolean</i><svg class="bi" width="16" height="16" viewBox="0 0 16 16"><use href="#i-yes"/></svg><svg class="pe" width="16" height="16" viewBox="0 0 16 16"><use href="#i-pen"/></svg><svg class="de" width="16" height="16" viewBox="0 0 16 16"><use href="#i-del"/></svg></div>
<div class="r b"><b class="k">system.dwg2dxf</b><i class="t">String</i><svg class="pe" width="16" height="16" viewBox="0 0 16 16"><use href="#i-pen"/></svg><svg class="de" width="16" height="16" viewBox="0 0 16 16"><use href="#i-del"/></svg></div>
<div class="r c"><b class="k" style="letter-spacing:0.09px">system.ghostscript.ps2pdf</b><i class="t">String</i><svg class="pe" width="16" height="16" viewBox="0 0 16 16"><use href="#i-pen"/></svg><svg class="de" width="16" height="16" viewBox="0 0 16 16"><use href="#i-del"/></svg></div>
<div class="r b"><b class="k">system.imagemagick.convert</b><i class="t">String</i><span class="v" style="letter-spacing:0.8px">C:\ImageMagick-6.7.9-Q16\convert.exe</span><svg class="pe" width="16" height="16" viewBox="0 0 16 16"><use href="#i-pen"/></svg><svg class="de" width="16" height="16" viewBox="0 0 16 16"><use href="#i-del"/></svg></div>
<div class="r c"><b class="k">system.keyword.lowercase</b><i class="t">Boolean</i><svg class="bi" width="16" height="16" viewBox="0 0 16 16"><use href="#i-no"/></svg><svg class="pe" width="16" height="16" viewBox="0 0 16 16"><use href="#i-pen"/></svg><svg class="de" width="16" height="16" viewBox="0 0 16 16"><use href="#i-del"/></svg></div>
<div class="r b"><b class="k" style="letter-spacing:0.05px">system.login.lowercase</b><i class="t">Boolean</i><svg class="bi" width="16" height="16" viewBox="0 0 16 16"><use href="#i-no"/></svg><svg class="pe" width="16" height="16" viewBox="0 0 16 16"><use href="#i-pen"/></svg><svg class="de" width="16" height="16" viewBox="0 0 16 16"><use href="#i-del"/></svg></div>
<div class="r c"><b class="k">system.maintenance</b><i class="t">Boolean</i><svg class="bi" width="16" height="16" viewBox="0 0 16 16"><use href="#i-no"/></svg><svg class="pe" width="16" height="16" viewBox="0 0 16 16"><use href="#i-pen"/></svg><svg class="de" width="16" height="16" viewBox="0 0 16 16"><use href="#i-del"/></svg></div>
<div class="r b"><b class="k">system.ocr</b><i class="t">String</i><span class="v"><span class="w" style="left:-0.5px;letter-spacing:0.95px">C:\Tesseract-OCR</span> <span class="w" style="left:104.9px;letter-spacing:0.62px">${fileIn}</span> <span class="w" style="left:156.7px;letter-spacing:0.5px">${fileOut}</span></span><svg class="pe" width="16" height="16" viewBox="0 0 16 16"><use href="#i-pen"/></svg><svg class="de" width="16" height="16" viewBox="0 0 16 16"><use href="#i-del"/></svg></div>
<div class="r c"><b class="k">system.openoffice.dictionary</b><i class="t">String</i><svg class="pe" width="16" height="16" viewBox="0 0 16 16"><use href="#i-pen"/></svg><svg class="de" width="16" height="16" viewBox="0 0 16 16"><use href="#i-del"/></svg></div>
<div class="r b"><b class="k">system.openoffice.path</b><i class="t">String</i><span class="v">C:\OpenOffice.org3\</span><svg class="pe" width="16" height="16" viewBox="0 0 16 16"><use href="#i-pen"/></svg><svg class="de" width="16" height="16" viewBox="0 0 16 16"><use href="#i-del"/></svg></div>
<div class="r c"><b class="k">system.openoffice.port</b><i class="t">Integer</i><span class="v">2002</span><svg class="pe" width="16" height="16" viewBox="0 0 16 16"><use href="#i-pen"/></svg><svg class="de" width="16" height="16" viewBox="0 0 16 16"><use href="#i-del"/></svg></div>
<div class="r b"><b class="k">system.openoffice.server</b><i class="t">String</i><svg class="pe" width="16" height="16" viewBox="0 0 16 16"><use href="#i-pen"/></svg><svg class="de" width="16" height="16" viewBox="0 0 16 16"><use href="#i-del"/></svg></div>
<div class="r c"><b class="k">system.openoffice.tasks</b><i class="t">Integer</i><span class="v">200</span><svg class="pe" width="16" height="16" viewBox="0 0 16 16"><use href="#i-pen"/></svg><svg class="de" width="16" height="16" viewBox="0 0 16 16"><use href="#i-del"/></svg></div>
<div class="r b"><b class="k">system.pdf.force.ocr</b><i class="t">Boolean</i><svg class="bi" width="16" height="16" viewBox="0 0 16 16"><use href="#i-no"/></svg><svg class="pe" width="16" height="16" viewBox="0 0 16 16"><use href="#i-pen"/></svg><svg class="de" width="16" height="16" viewBox="0 0 16 16"><use href="#i-del"/></svg></div>
<div class="r c"><b class="k">system.previewer</b><i class="t">String</i><span class="v" style="letter-spacing:0.2px">zviewer</span><svg class="pe" width="16" height="16" viewBox="0 0 16 16"><use href="#i-pen"/></svg><svg class="de" width="16" height="16" viewBox="0 0 16 16"><use href="#i-del"/></svg></div>
<div class="r b"><b class="k">system.readonly</b><i class="t">Boolean</i><svg class="bi" width="16" height="16" viewBox="0 0 16 16"><use href="#i-no"/></svg><svg class="pe" width="16" height="16" viewBox="0 0 16 16"><use href="#i-pen"/></svg><svg class="de" width="16" height="16" viewBox="0 0 16 16"><use href="#i-del"/></svg></div>
<div class="r c"><b class="k">system.swftools.pdf2swf</b><i class="t">String</i><span class="v"><span class="w" style="left:-0.2px;letter-spacing:0.91px">C:\SWFTools\pdf2swf.exe</span> <span class="w" style="left:148.5px;letter-spacing:2.5px">-T</span> <span class="w" style="left:164.2px;letter-spacing:0px">9</span> <span class="w" style="left:175.7px;letter-spacing:0.9px">-f</span> <span class="w" style="left:188px;letter-spacing:0.65px">${fileIn}</span> <span class="w" style="left:240.7px;letter-spacing:1.6px">-o</span> <span class="w" style="left:255.7px;letter-spacing:0.56px">${fileOut}</span></span><svg class="pe" width="16" height="16" viewBox="0 0 16 16"><use href="#i-pen"/></svg><svg class="de" width="16" height="16" viewBox="0 0 16 16"><use href="#i-del"/></svg></div>
<div class="r b"><b class="k">system.webdav.fix</b><i class="t">Boolean</i><svg class="bi" width="16" height="16" viewBox="0 0 16 16"><use href="#i-no"/></svg><svg class="pe" width="16" height="16" viewBox="0 0 16 16"><use href="#i-pen"/></svg><svg class="de" width="16" height="16" viewBox="0 0 16 16"><use href="#i-del"/></svg></div>
<div class="r c"><b class="k">system.webdav.server</b><i class="t">Boolean</i><svg class="bi" width="16" height="16" viewBox="0 0 16 16"><use href="#i-no"/></svg><svg class="pe" width="16" height="16" viewBox="0 0 16 16"><use href="#i-pen"/></svg><svg class="de" width="16" height="16" viewBox="0 0 16 16"><use href="#i-del"/></svg></div>
<div class="r b"><b class="k" style="letter-spacing:0.04px">update.info</b><i class="t">Boolean</i><svg class="bi" width="16" height="16" viewBox="0 0 16 16"><use href="#i-yes"/></svg><svg class="pe" width="16" height="16" viewBox="0 0 16 16"><use href="#i-pen"/></svg><svg class="de" width="16" height="16" viewBox="0 0 16 16"><use href="#i-del"/></svg></div>
<div class="r c"><b class="k" style="letter-spacing:0.105px">user.assign.document.creation</b><i class="t">Boolean</i><svg class="bi" width="16" height="16" viewBox="0 0 16 16"><use href="#i-yes"/></svg><svg class="pe" width="16" height="16" viewBox="0 0 16 16"><use href="#i-pen"/></svg><svg class="de" width="16" height="16" viewBox="0 0 16 16"><use href="#i-del"/></svg></div>
<div class="r b"><b class="k">user.item.cache</b><i class="t">Boolean</i><svg class="bi" width="16" height="16" viewBox="0 0 16 16"><use href="#i-yes"/></svg><svg class="pe" width="16" height="16" viewBox="0 0 16 16"><use href="#i-pen"/></svg><svg class="de" width="16" height="16" viewBox="0 0 16 16"><use href="#i-del"/></svg></div>
<div class="r c"><b class="k">user.keywords.cache</b><i class="t">Boolean</i><svg class="bi" width="16" height="16" viewBox="0 0 16 16"><use href="#i-no"/></svg><svg class="pe" width="16" height="16" viewBox="0 0 16 16"><use href="#i-pen"/></svg><svg class="de" width="16" height="16" viewBox="0 0 16 16"><use href="#i-del"/></svg></div>
</div>
<div id="thead"><div class="h" style="left:0;width:264px"><span>Key</span></div><div class="h" style="left:264px;width:42px"><span>Type</span></div><div class="h" style="left:306px;width:940px"><span>Value</span></div><div class="h last" style="left:1246px;width:54px"></div></div>
</div>
</div>
</div>
</body>
</html>
